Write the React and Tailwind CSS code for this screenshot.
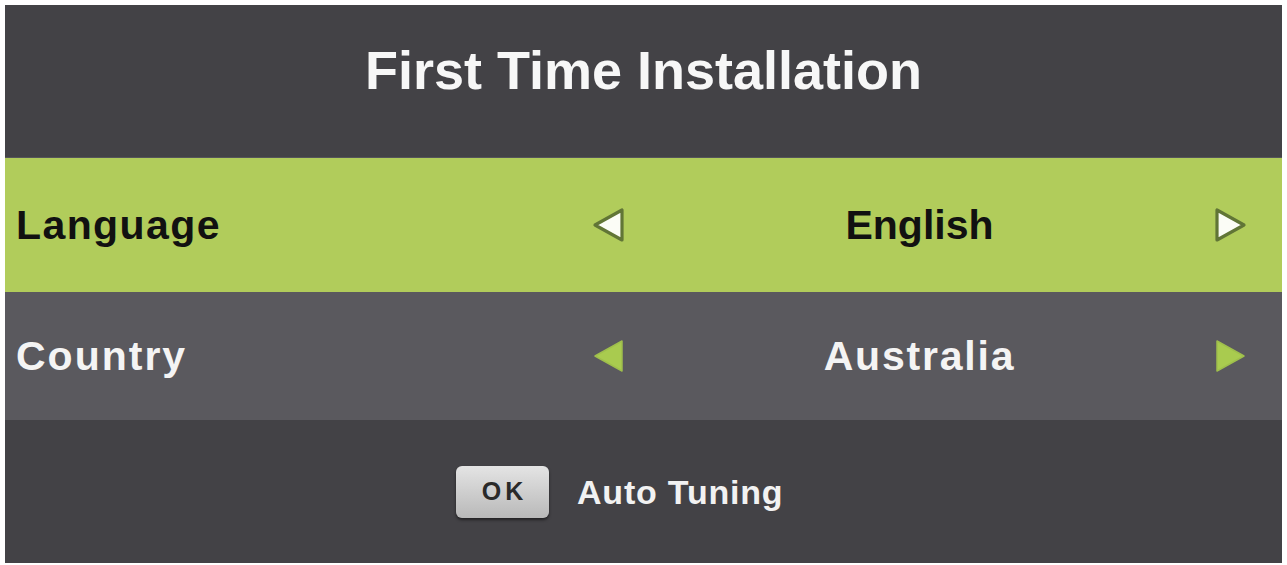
import React from 'react'

const Arrow = ({ dir = 'left', variant = 'white' }) => {
  const points = dir === 'left' ? '3,18 30,3 30,33' : '31,18 4,3 4,33'
  return (
    <svg width="34" height="36" viewBox="0 0 34 36" className="block">
      {variant === 'white' ? (
        <polygon points={points} fill="#fbfcf6" stroke="#617536" strokeWidth="3.2" strokeLinejoin="round" />
      ) : (
        <polygon points={points} fill="#a9cb4f" stroke="#9fbf4c" strokeWidth="1.5" strokeLinejoin="round" />
      )}
    </svg>
  )
}

const Row = ({ label, value, active }) => (
  <div className={`flex items-center pl-[11px] pr-[35px] ${active ? 'h-[134px] bg-[#b1cc5b] text-[#111111]' : 'h-[128px] bg-[#5a595e] text-[#f4f4f4]'}`}>
    <div className={`w-[576px] text-[41px] font-bold leading-none ${active ? 'tracking-[1.4px]' : 'tracking-[2px]'}`}>
      {label}
    </div>
    <Arrow dir="left" variant={active ? 'white' : 'green'} />
    <div className={`flex-1 text-center text-[41px] font-bold leading-none ${active ? 'tracking-[0px]' : 'tracking-[1.8px]'}`}>
      {value}
    </div>
    <Arrow dir="right" variant={active ? 'white' : 'green'} />
  </div>
)

export default function App() {
  return (
    <div className="w-[1287px] h-[565px] bg-white pt-[5px] pl-[5px] pr-[5px]" style={{ fontFamily: '"Liberation Sans", Arial, sans-serif' }}>
      <div className="flex flex-col w-full">
        <div className="h-[153px] bg-[#434246] flex justify-center pt-[38px] border-b border-[#55555a]">
          <h1 className="text-[54px] font-bold leading-none text-[#f7f7f7] tracking-[0px]">
            First Time Installation
          </h1>
        </div>
        <Row label="Language" value="English" active />
        <Row label="Country" value="Australia" />
        <div className="h-[143px] bg-[#434246] flex items-center pl-[451px]">
          <div className="w-[93px] h-[52px] rounded-[6px] bg-gradient-to-b from-[#e4e4e4] to-[#b9b9b9] shadow-[0_2px_3px_rgba(0,0,0,0.5)] flex items-center justify-center">
            <span className="text-[25px] font-bold text-[#2a2a2a] tracking-[4px] leading-none pl-[4px]">OK</span>
          </div>
          <span className="ml-[28px] text-[34px] font-bold leading-none text-[#f2f2f2] tracking-[0.8px]">
            Auto Tuning
          </span>
        </div>
      </div>
    </div>
  )
}
